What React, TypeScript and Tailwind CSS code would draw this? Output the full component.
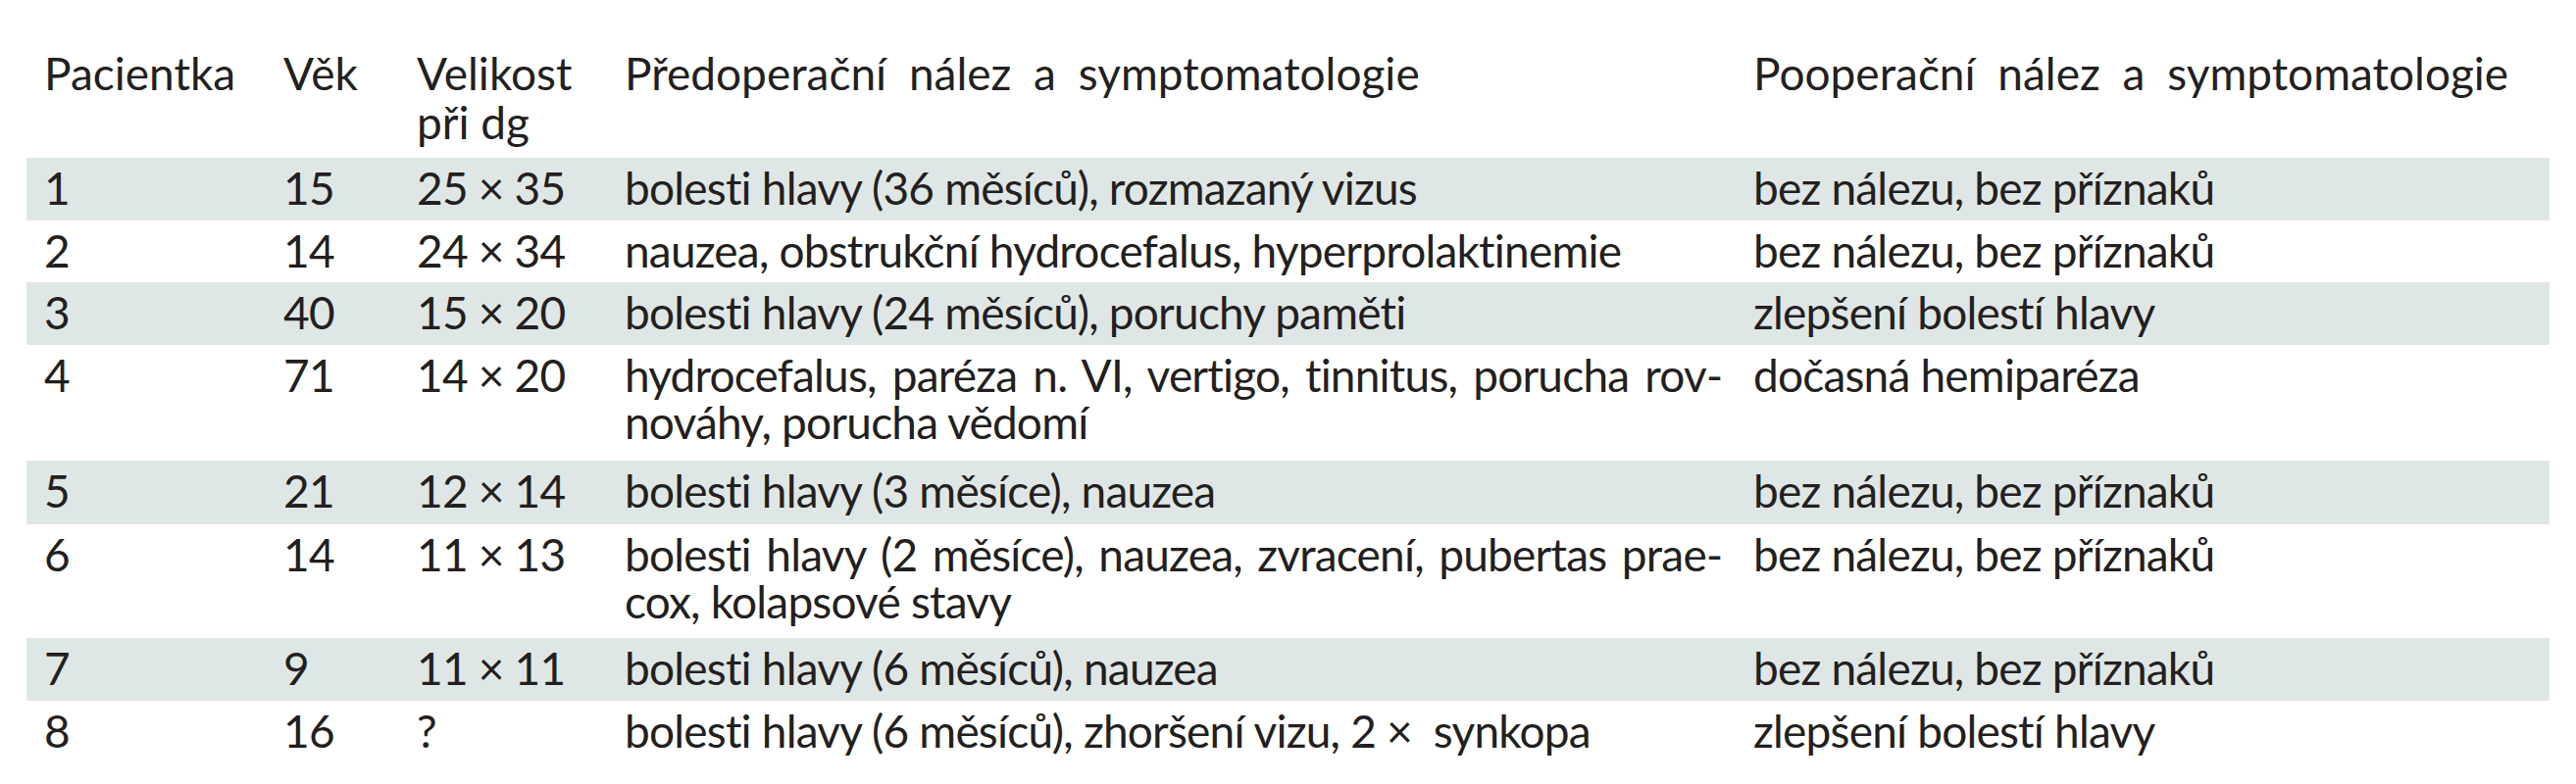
type Row = {
  id: string
  age: string
  size: string
  pre: string
  post: string
}

// \u00ad = soft hyphen, lets the long findings break where the print layout breaks them
const rows: Row[] = [
  { id: '1', age: '15', size: '25 × 35', pre: 'bolesti hlavy (36 měsíců), rozmazaný vizus', post: 'bez nálezu, bez příznaků' },
  { id: '2', age: '14', size: '24 × 34', pre: 'nauzea, obstrukční hydrocefalus, hyperprolaktinemie', post: 'bez nálezu, bez příznaků' },
  { id: '3', age: '40', size: '15 × 20', pre: 'bolesti hlavy (24 měsíců), poruchy paměti', post: 'zlepšení bolestí hlavy' },
  {
    id: '4',
    age: '71',
    size: '14 × 20',
    pre: 'hydrocefalus, paréza n. VI, vertigo, tinnitus, porucha rov\u00adnováhy, porucha vědomí',
    post: 'dočasná hemiparéza',
  },
  { id: '5', age: '21', size: '12 × 14', pre: 'bolesti hlavy (3 měsíce), nauzea', post: 'bez nálezu, bez příznaků' },
  {
    id: '6',
    age: '14',
    size: '11 × 13',
    pre: 'bolesti hlavy (2 měsíce), nauzea, zvracení, pubertas prae\u00adcox, kolapsové stavy',
    post: 'bez nálezu, bez příznaků',
  },
  { id: '7', age: '9', size: '11 × 11', pre: 'bolesti hlavy (6 měsíců), nauzea', post: 'bez nálezu, bez příznaků' },
  { id: '8', age: '16', size: '?', pre: 'bolesti hlavy (6 měsíců), zhoršení vizu, 2 ×\u00a0 synkopa', post: 'zlepšení bolestí hlavy' },
]

// row heights in px, measured off the reference
const heights = ['h-[64px]', 'h-[63px]', 'h-[64px]', 'h-[118px]', 'h-[65px]', 'h-[116px]', 'h-[64px]', 'h-[64px]']

export default function App() {
  return (
    <div lang="cs" className="w-[2627px] h-[800px] bg-white text-[#231f20] font-['Lato','Roboto',sans-serif] text-[46px]">
      <table className="ml-[27px] w-[2573px] table-fixed">
        <colgroup>
          <col className="w-[244px]" />
          <col className="w-[136px]" />
          <col className="w-[212px]" />
          <col className="w-[1151px]" />
          <col className="w-[830px]" />
        </colgroup>
        <thead>
          <tr className="h-[161px]">
            <th className="align-top text-left font-normal pl-[18px] pt-[50px] leading-[50px]">Pacientka</th>
            <th className="align-top text-left font-normal pl-[18px] pt-[50px] leading-[50px]">Věk</th>
            <th className="align-top text-left font-normal pl-[18px] pt-[50px] leading-[50px]">
              Velikost
              <br />
              při dg
            </th>
            <th className="align-top text-left font-normal pl-[18px] pt-[50px] leading-[50px] [word-spacing:11px]">
              Předoperační nález a symptomatologie
            </th>
            <th className="align-top text-left font-normal pl-[18px] pt-[50px] leading-[50px] [word-spacing:11px]">
              Pooperační nález a symptomatologie
            </th>
          </tr>
        </thead>
        <tbody className="leading-[48px] tracking-[-0.8px]">
          {rows.map((r, i) => (
            <tr key={r.id} className={`${heights[i]} ${i % 2 === 0 ? 'bg-[#dfe7e6]' : 'bg-white'}`}>
              <td className="align-top pl-[18px] pt-[7px]">{r.id}</td>
              <td className="align-top pl-[18px] pt-[7px]">{r.age}</td>
              <td className="align-top pl-[18px] pt-[7px] whitespace-nowrap">{r.size}</td>
              <td className="align-top pl-[18px] pr-[13px] pt-[7px] text-justify hyphens-manual">{r.pre}</td>
              <td className="align-top pl-[18px] pt-[7px]">{r.post}</td>
            </tr>
          ))}
        </tbody>
      </table>
    </div>
  )
}
